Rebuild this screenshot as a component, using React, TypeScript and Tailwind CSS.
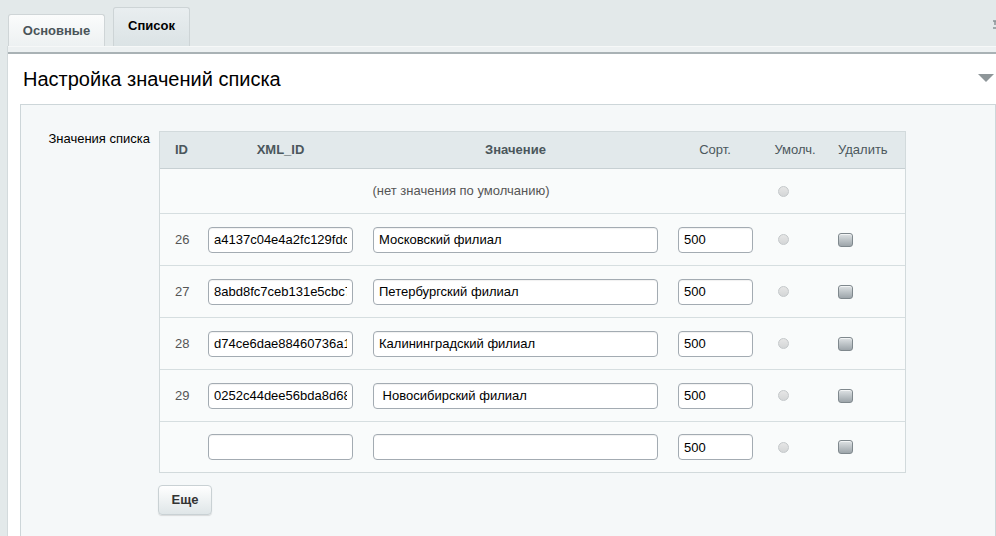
import React from "react";

const rows = [
  { id: "26", xml: "a4137c04e4a2fc129fdc3e1b", value: "Московский филиал", sort: "500" },
  { id: "27", xml: "8abd8fc7ceb131e5cbc7a90f", value: "Петербургский филиал", sort: "500" },
  { id: "28", xml: "d74ce6dae88460736a1f5c2d", value: "Калининградский филиал", sort: "500" },
  { id: "29", xml: "0252c44dee56bda8d68e7f13", value: " Новосибирский филиал", sort: "500" },
  { id: "", xml: "", value: "", sort: "500" },
];

const grid = "grid grid-cols-[38px_165px_305px_94px_66px_77px]";

function Radio() {
  return (
    <span className="block h-[11px] w-[11px] rounded-full border border-[#c4c8ca] bg-gradient-to-b from-[#e6e6e6] to-[#d4d6d7]" />
  );
}

function Checkbox() {
  return (
    <span className="block h-[14px] w-[15px] rounded-[3px] border border-[#7f888d] bg-gradient-to-b from-[#dfe3e5] to-[#9da5aa] shadow-[inset_0_1px_0_#f2f4f5]" />
  );
}

function Field({ value, className }: { value: string; className: string }) {
  return (
    <input
      readOnly
      value={value}
      className={`h-[26px] rounded-[4px] border border-[#a3abb2] bg-white px-[5px] text-[13px] text-black shadow-[inset_0_1px_1px_rgba(0,0,0,0.06)] outline-none ${className}`}
    />
  );
}

export default function App() {
  return (
    <div
      className="relative flex h-[536px] w-[996px] flex-col overflow-hidden bg-[#e3e9ea]"
      style={{ fontFamily: '"Liberation Sans", Arial, sans-serif' }}
    >
      {/* tabs */}
      <div className="flex h-[46px] items-end gap-[8px] pl-[8px]">
        <div className="flex h-[32px] w-[97px] items-center justify-center rounded-t-[3px] border border-b-0 border-[#cfd5d7] bg-gradient-to-b from-[#fbfcfc] to-[#edf1f2] text-[13px] font-bold text-[#4a5458]">
          Основные
        </div>
        <div className="flex h-[39px] w-[77px] items-center justify-center rounded-t-[3px] border border-b-0 border-[#cdd4d6] bg-gradient-to-b from-[#e9eef0] to-[#dbe3e5] pb-[3px] text-[13px] font-bold text-black">
          Список
        </div>
      </div>
      <svg className="absolute right-0 top-[18px]" width="4" height="14" viewBox="0 0 4 14">
        <path d="M1 3h3M3 3v4M1 10h3" stroke="#8a9296" strokeWidth="1.5" fill="none" />
      </svg>

      {/* panel */}
      <div className="ml-[7px] flex flex-1 flex-col border-l border-[#d3dadc] bg-white">
        <div className="h-[6px] border-t border-[#f6f8f8] bg-[#edf1f2]" />
        <div className="h-[2px] bg-[#a9b2b5]" />
        <div className="flex h-[50px] items-center justify-between pl-[15px] pr-[2px]">
          <h1 className="text-[20px] text-black">Настройка значений списка</h1>
          <span className="mb-[2px] h-0 w-0 border-l-[8px] border-r-[8px] border-t-[8px] border-l-transparent border-r-transparent border-t-[#8e9699]" />
        </div>

        <div className="ml-[12px] flex flex-1 border-l border-t border-r border-[#cdd6d9] bg-[#f5f8f9] pt-[26px]">
          <div className="w-[138px] pr-[9px] text-right text-[13px] leading-[15px] text-black">
            Значения списка
          </div>
          <div className="flex flex-col">
            <div className="w-[747px] border border-[#d2dadc] bg-[#f9fbfb]">
              <div className={`${grid} h-[37px] items-center border-b border-[#c7d0d3] bg-[#e2e9eb] text-[13px] text-[#4b575c]`}>
                <div className="pl-[15px] font-bold">ID</div>
                <div className="text-center font-bold">XML_ID</div>
                <div className="text-center font-bold">Значение</div>
                <div className="text-center">Сорт.</div>
                <div className="text-center">Умолч.</div>
                <div className="pl-[10px]">Удалить</div>
              </div>
              <div className={`${grid} h-[44px] items-center text-[13px] text-[#555]`}>
                <div className="col-span-4 text-center">(нет значения по умолчанию)</div>
                <div className="pl-[16px]">
                  <Radio />
                </div>
                <div />
              </div>
              {rows.map((r, i) => (
                <div
                  key={i}
                  className={`${grid} ${i === rows.length - 1 ? "h-[51px]" : "h-[52px]"} items-center border-t border-[#d6dee0] text-[13px] text-[#555]`}
                >
                  <div className="pl-[15px]">{r.id}</div>
                  <div className="pl-[10px]">
                    <Field value={r.xml} className="w-[145px]" />
                  </div>
                  <div className="pl-[10px]">
                    <Field value={r.value} className="w-[285px]" />
                  </div>
                  <div className="pl-[10px]">
                    <Field value={r.sort} className="w-[75px]" />
                  </div>
                  <div className="pl-[16px]">
                    <Radio />
                  </div>
                  <div className="pl-[10px]">
                    <Checkbox />
                  </div>
                </div>
              ))}
            </div>
            <button className="ml-[-1px] mt-[12px] h-[30px] w-[54px] rounded-[4px] border border-[#c9d1d4] bg-gradient-to-b from-[#ffffff] to-[#dfe6e8] text-[13px] font-bold text-[#333] shadow-[0_1px_1px_rgba(0,0,0,0.12)]">
              Еще
            </button>
          </div>
        </div>
      </div>
    </div>
  );
}
